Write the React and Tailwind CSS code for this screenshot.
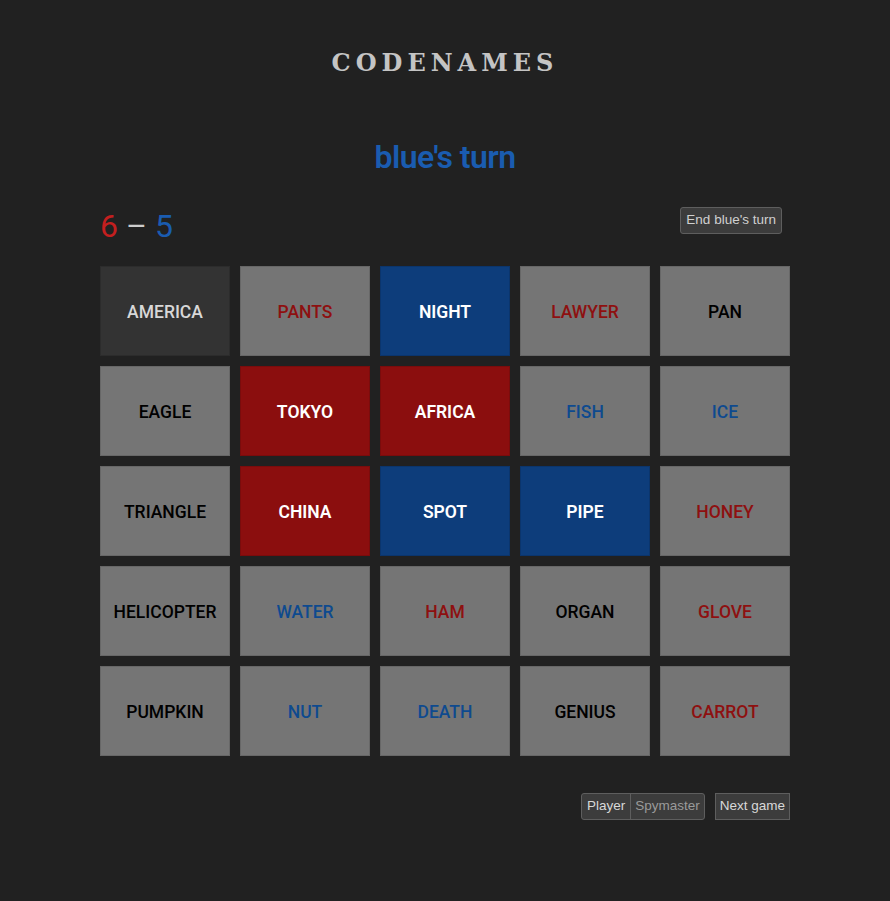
import React from 'react';

const words = [
  ['AMERICA', 'black'], ['PANTS', 'red'], ['NIGHT', 'blueOpen'], ['LAWYER', 'red'], ['PAN', 'neutral'],
  ['EAGLE', 'neutral'], ['TOKYO', 'redOpen'], ['AFRICA', 'redOpen'], ['FISH', 'blue'], ['ICE', 'blue'],
  ['TRIANGLE', 'neutral'], ['CHINA', 'redOpen'], ['SPOT', 'blueOpen'], ['PIPE', 'blueOpen'], ['HONEY', 'red'],
  ['HELICOPTER', 'neutral'], ['WATER', 'blue'], ['HAM', 'red'], ['ORGAN', 'neutral'], ['GLOVE', 'red'],
  ['PUMPKIN', 'neutral'], ['NUT', 'blue'], ['DEATH', 'blue'], ['GENIUS', 'neutral'], ['CARROT', 'red'],
];

const cardStyles = {
  black: 'bg-[#333333] border-[#2c2c2c] text-[#d8d8d8] font-medium',
  neutral: 'bg-[#757575] border-[#676767] text-black font-medium',
  red: 'bg-[#757575] border-[#676767] text-[#8e1010] font-medium',
  blue: 'bg-[#757575] border-[#676767] text-[#0e4a8f] font-medium',
  redOpen: 'bg-[#8b0e0e] border-[#7a0c0c] text-white font-semibold',
  blueOpen: 'bg-[#0d3d7b] border-[#0b356c] text-white font-semibold',
};

const Card = ({ word, kind }) => (
  <div className={`h-[90px] border pt-[2px] flex items-center justify-center text-[17.5px] ${cardStyles[kind]}`}>
    {word}
  </div>
);

export default function App() {
  return (
    <div className="min-h-[901px] bg-[#212121] font-['Roboto',sans-serif]">
      <div className="w-[690px] mx-auto pt-[47px]">
        <h1 className="text-center font-['DejaVu_Serif',serif] font-bold text-[24px] tracking-[5px] text-[#c4c4c4] leading-[32px]">
          CODENAMES
        </h1>

        <div className="mt-[58px] text-center text-[32px] font-semibold text-[#1a5cb0] tracking-[-0.6px] leading-[40px]">
          blue's turn
        </div>

        <div className="mt-[19px] flex items-center justify-between h-[52px]">
          <div className="text-[32px] leading-[40px] pt-[8px]">
            <span className="text-[#c41f1f]">6</span>
            <span className="text-[#cccccc] mx-[8px]">–</span>
            <span className="text-[#1a5cb0]">5</span>
          </div>
          <button className="mr-[8px] -mt-[4px] h-[27px] px-[5px] rounded-[3px] bg-[#3c3c3c] border border-[#5e5e5e] text-[#d0d0d0] text-[13.5px] font-['Liberation_Sans',sans-serif]">
            End blue's turn
          </button>
        </div>

        <div className="mt-[18px] grid grid-cols-5 gap-[10px]">
          {words.map(([w, k]) => (
            <Card key={w} word={w} kind={k} />
          ))}
        </div>

        <div className="mt-[37px] flex justify-end gap-[10px] font-['Liberation_Sans',sans-serif] text-[13.5px]">
          <div className="flex h-[27px] rounded-[3px] border border-[#5e5e5e] bg-[#3c3c3c] overflow-hidden">
            <span className="px-[5px] flex items-center text-[#d8d8d8] border-r border-[#5e5e5e]">Player</span>
            <span className="px-[4px] flex items-center text-[#9a9a9a]">Spymaster</span>
          </div>
          <button className="h-[27px] px-[4px] border border-[#5e5e5e] bg-[#3c3c3c] text-[#d8d8d8]">
            Next game
          </button>
        </div>
      </div>
    </div>
  );
}
